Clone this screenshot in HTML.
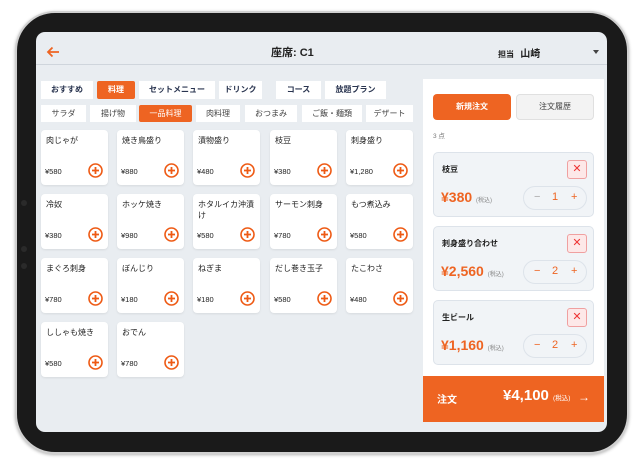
<!DOCTYPE html>
<html><head><meta charset="utf-8"><style>
*{margin:0;padding:0;box-sizing:border-box}
body{width:640px;height:467px;background:#fff;position:relative;overflow:hidden;font-family:"Liberation Sans","Noto Sans CJK JP",sans-serif;color:#222}
.a{position:absolute}
.bezel{left:15px;top:11px;width:614px;height:443px;background:#1a1a1a;border-radius:40px;border:2px solid #d0d0d0;box-shadow:0 1px 3px rgba(0,0,0,.3)}
.screen{left:36px;top:32px;width:571px;height:400px;background:#e9edf1;border-radius:9px;overflow:hidden}
.tab{position:absolute;background:#fff;font-size:8px;font-weight:bold;color:#2a3550;text-align:center;line-height:18px;height:18px}
.tab.on{background:#ee6422;color:#fff;border-radius:2px}
.t2{font-weight:normal;color:#444;height:17px;line-height:17px}
.card{position:absolute;width:67px;height:55px;background:#fff;border-radius:4px;box-shadow:0 1px 2px rgba(0,0,0,.08)}
.card .n{position:absolute;left:5px;top:5px;font-size:8px;line-height:11px;right:4px;color:#222}
.card .p{position:absolute;left:4px;top:37px;font-size:7.5px;color:#222}
.card svg{position:absolute;left:47px;top:33px}
.item{position:absolute;left:397px;width:161px;height:65px;background:#f1f4f7;border:1px solid #dde3ea;border-radius:5px}
.item .n{position:absolute;left:8px;top:11px;font-size:8px;font-weight:bold}
.item .x{position:absolute;left:133px;top:7px;width:20px;height:19px;border:1px solid #f0a0a0;background:#fde8e8;border-radius:3px;color:#e33;font-size:11px;text-align:center;line-height:17px}
.item .pr{position:absolute;left:7px;top:36px;font-size:14px;font-weight:bold;color:#ee6422}
.item .pr small{font-size:6px;color:#888;font-weight:normal}
.item .st{position:absolute;left:89px;top:33px;width:64px;height:24px;border:1px solid #dde3ea;border-radius:12px;background:#f1f4f7;font-size:11px;color:#ee6422}
.st span{position:absolute;top:4px}
</style></head><body>
<div class="a bezel"></div>
<div class="a screen">
<svg class="a" style="left:10px;top:14px" width="14" height="12" viewBox="0 0 14 12"><path d="M13 6H2M6.5 1.5L2 6l4.5 4.5" stroke="#ee6422" stroke-width="1.8" fill="none"/></svg>
<div class="a" style="left:235px;top:12px;font-size:11px;font-weight:bold">座席: C1</div>
<div class="a" style="left:462px;top:13px;font-size:8px;font-weight:bold">担当 <span style="font-size:10px;margin-left:4px">山崎</span></div>
<div class="a" style="left:557px;top:18px;border-left:3.5px solid transparent;border-right:3.5px solid transparent;border-top:4px solid #444"></div>
<div class="a" style="left:0;top:32px;width:571px;height:1px;background:#cfd5dc"></div>

<div class="tab" style="left:5px;top:49px;width:52px">おすすめ</div>
<div class="tab on" style="left:61px;top:49px;width:38px">料理</div>
<div class="tab" style="left:103px;top:49px;width:76px">セットメニュー</div>
<div class="tab" style="left:183px;top:49px;width:43px">ドリンク</div>
<div class="tab" style="left:240px;top:49px;width:45px">コース</div>
<div class="tab" style="left:289px;top:49px;width:61px">放題プラン</div>
<div class="tab t2" style="left:5px;top:73px;width:45px">サラダ</div>
<div class="tab t2" style="left:54px;top:73px;width:46px">揚げ物</div>
<div class="tab t2 on" style="left:103px;top:73px;width:53px">一品料理</div>
<div class="tab t2" style="left:160px;top:73px;width:44px">肉料理</div>
<div class="tab t2" style="left:209px;top:73px;width:52px">おつまみ</div>
<div class="tab t2" style="left:266px;top:73px;width:60px">ご飯・麺類</div>
<div class="tab t2" style="left:330px;top:73px;width:47px">デザート</div>

<div class="a" style="left:387px;top:47px;width:181px;height:300px;background:#fff"></div>
<div class="a" style="left:397px;top:62px;width:78px;height:26px;background:#ee6422;border-radius:4px;color:#fff;font-size:8px;font-weight:bold;text-align:center;line-height:26px">新規注文</div>
<div class="a" style="left:480px;top:62px;width:78px;height:26px;background:#f3f3f3;border:1px solid #e0e0e0;border-radius:4px;color:#444;font-size:8px;text-align:center;line-height:24px">注文履歴</div>
<div class="a" style="left:397px;top:98px;font-size:6.5px;color:#777">3 点</div>

<div class="item" style="top:120px"><div class="n">枝豆</div><div class="x">✕</div><div class="pr">¥380 <small>(税込)</small></div><div class="st"><span style="left:10px;color:#aaa">−</span><span style="left:28px">1</span><span style="left:47px">+</span></div></div>
<div class="item" style="top:194px"><div class="n">刺身盛り合わせ</div><div class="x">✕</div><div class="pr">¥2,560 <small>(税込)</small></div><div class="st"><span style="left:10px">−</span><span style="left:28px">2</span><span style="left:47px">+</span></div></div>
<div class="item" style="top:268px"><div class="n">生ビール</div><div class="x">✕</div><div class="pr">¥1,160 <small>(税込)</small></div><div class="st"><span style="left:10px">−</span><span style="left:28px">2</span><span style="left:47px">+</span></div></div>

<div class="a" style="left:387px;top:344px;width:181px;height:46px;background:#ee6422;color:#fff">
<div class="a" style="left:14px;top:15px;font-size:10px;font-weight:bold">注文</div>
<div class="a" style="left:80px;top:11px;font-size:15px;font-weight:bold">¥4,100 <span style="font-size:6.5px;font-weight:normal">(税込)</span></div>
<div class="a" style="left:155px;top:14px;font-size:12px">→</div>
</div>

<div id="cards"></div>
</div>
<div class="a" style="left:21px;top:200px;width:6px;height:6px;border-radius:3px;background:#2a2a2a"></div>
<div class="a" style="left:21px;top:246px;width:6px;height:6px;border-radius:3px;background:#2a2a2a"></div>
<div class="a" style="left:21px;top:263px;width:6px;height:6px;border-radius:3px;background:#2a2a2a"></div>
<script>
var d=[["肉じゃが","¥580"],["焼き鳥盛り","¥880"],["漬物盛り","¥480"],["枝豆","¥380"],["刺身盛り","¥1,280"],["冷奴","¥380"],["ホッケ焼き","¥980"],["ホタルイカ沖漬け","¥580"],["サーモン刺身","¥780"],["もつ煮込み","¥580"],["まぐろ刺身","¥780"],["ぼんじり","¥180"],["ねぎま","¥180"],["だし巻き玉子","¥580"],["たこわさ","¥480"],["ししゃも焼き","¥580"],["おでん","¥780"]];
var xs=[5,81,157,234,310],ys=[98,162,226,290],h="";
d.forEach(function(c,i){h+='<div class="card" style="left:'+xs[i%5]+'px;top:'+ys[Math.floor(i/5)]+'px"><div class="n">'+c[0]+'</div><div class="p">'+c[1]+'</div><svg width="15" height="15" viewBox="0 0 15 15"><circle cx="7.5" cy="7.5" r="6.5" fill="none" stroke="#ee5a14" stroke-width="1.6"/><path d="M7.5 4v7M4 7.5h7" stroke="#ee5a14" stroke-width="1.8"/></svg></div>'});
document.getElementById("cards").innerHTML=h;
</script>
</body></html>
